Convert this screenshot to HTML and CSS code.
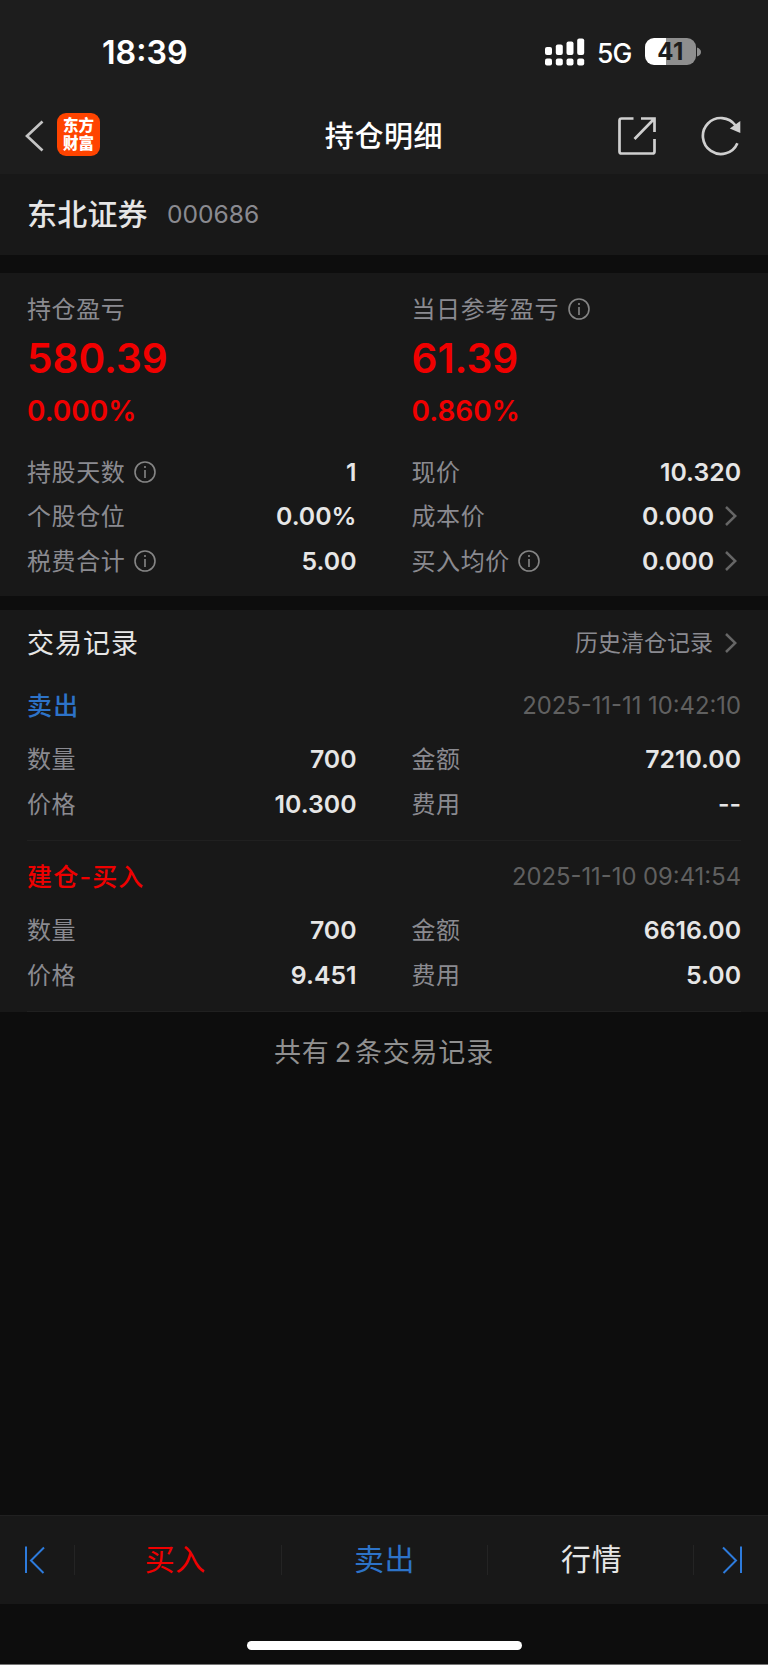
FILE: index.html
```html
<!DOCTYPE html>
<html lang="zh-CN">
<head>
    <meta charset="UTF-8">
    <title>持仓明细</title>
    <link rel="stylesheet" href="styles.css">
</head>
<body>
    <div class="header">
        <div class="status">
            <span class="time">18:39</span>
            <svg class="signal" width="40" height="28" viewBox="0 0 40 28" fill="#fff">
                <rect x="0" y="9" width="7" height="8" rx="2"/>
                <rect x="10.8" y="6.5" width="7" height="10.5" rx="2"/>
                <rect x="21.5" y="3.5" width="7" height="13.5" rx="2"/>
                <rect x="32.2" y="0.5" width="7" height="16.5" rx="2"/>
                <rect x="0" y="20.5" width="7" height="7" rx="2"/>
                <rect x="10.8" y="20.5" width="7" height="7" rx="2"/>
                <rect x="21.5" y="20.5" width="7" height="7" rx="2"/>
                <rect x="32.2" y="20.5" width="7" height="7" rx="2"/>
            </svg>
            <span class="network">5G</span>
            <span class="battery">41</span>
            <svg class="battery-cap" width="4" height="10" viewBox="0 0 4 10"><path d="M0 0.5Q4 2 4 5T0 9.5Z" fill="#8e8e8e"/></svg>
        </div>
        <div class="nav">
            <svg class="back" width="20" height="32" viewBox="0 0 20 32" fill="none" stroke="#c4c4c4" stroke-width="2.7"><path d="M17.5 1.5L2 16L17.5 30.5"/></svg>
            <div class="logo"><span>东方</span><span>财富</span></div>
            <h1>持仓明细</h1>
            <svg class="share" width="38" height="38" viewBox="0 0 38 38" fill="none" stroke="#cfcfcf" stroke-width="2.7">
                <path d="M15.5 1.5H3.5Q1.5 1.5 1.5 3.5V34.5Q1.5 36.5 3.5 36.5H34.5Q36.5 36.5 36.5 34.5V22"/>
                <path d="M23 1.5H36.5V15M36 2L16.5 22"/>
            </svg>
            <svg class="refresh" width="42" height="40" viewBox="0 0 42 40">
                <path d="M36.4 27.2A18 18 0 1 1 34.5 9.5" fill="none" stroke="#cfcfcf" stroke-width="2.7"/>
                <path d="M39.3 5V17L28.8 12.5Z" fill="#cfcfcf"/>
            </svg>
        </div>
    </div>

    <div class="stock">
        <span class="name">东北证券</span>
        <span class="code">000686</span>
    </div>

    <div class="summary">
        <div class="columns">
            <div class="profit">
                <div class="label"><span>持仓盈亏</span></div>
                <div class="amount">580.39</div>
                <div class="percent">0.000%</div>
            </div>
            <div class="profit">
                <div class="label"><span>当日参考盈亏</span><svg class="info" viewBox="0 0 22 22"><circle cx="11" cy="11" r="10"/><path d="M11 9V17M11 5V7"/></svg></div>
                <div class="amount">61.39</div>
                <div class="percent">0.860%</div>
            </div>
        </div>
        <div class="columns details">
            <div class="row"><div class="label"><span>持股天数</span><svg class="info" viewBox="0 0 22 22"><circle cx="11" cy="11" r="10"/><path d="M11 9V17M11 5V7"/></svg></div><div class="value">1</div></div>
            <div class="row"><div class="label"><span>现价</span></div><div class="value">10.320</div></div>
            <div class="row"><div class="label"><span>个股仓位</span></div><div class="value">0.00%</div></div>
            <div class="row"><div class="label"><span>成本价</span></div><div class="value">0.000<svg class="arrow" viewBox="0 0 12 20"><path d="M1 1L10.3 10L1 19"/></svg></div></div>
            <div class="row"><div class="label"><span>税费合计</span><svg class="info" viewBox="0 0 22 22"><circle cx="11" cy="11" r="10"/><path d="M11 9V17M11 5V7"/></svg></div><div class="value">5.00</div></div>
            <div class="row"><div class="label"><span>买入均价</span><svg class="info" viewBox="0 0 22 22"><circle cx="11" cy="11" r="10"/><path d="M11 9V17M11 5V7"/></svg></div><div class="value">0.000<svg class="arrow" viewBox="0 0 12 20"><path d="M1 1L10.3 10L1 19"/></svg></div></div>
        </div>
    </div>

    <div class="records">
        <div class="records-title">
            <h2>交易记录</h2>
            <div class="history"><span>历史清仓记录</span><svg class="arrow" viewBox="0 0 12 20"><path d="M1 1L10.3 10L1 19"/></svg></div>
        </div>
        <div class="record">
            <div class="record-head">
                <span class="type sell">卖出</span>
                <span class="date">2025-11-11 10:42:10</span>
            </div>
            <div class="columns">
                <div class="row"><div class="label"><span>数量</span></div><div class="value">700</div></div>
                <div class="row"><div class="label"><span>金额</span></div><div class="value">7210.00</div></div>
                <div class="row"><div class="label"><span>价格</span></div><div class="value">10.300</div></div>
                <div class="row"><div class="label"><span>费用</span></div><div class="value">--</div></div>
            </div>
        </div>
        <div class="record">
            <div class="record-head">
                <span class="type buy">建仓-买入</span>
                <span class="date">2025-11-10 09:41:54</span>
            </div>
            <div class="columns">
                <div class="row"><div class="label"><span>数量</span></div><div class="value">700</div></div>
                <div class="row"><div class="label"><span>金额</span></div><div class="value">6616.00</div></div>
                <div class="row"><div class="label"><span>价格</span></div><div class="value">9.451</div></div>
                <div class="row"><div class="label"><span>费用</span></div><div class="value">5.00</div></div>
            </div>
        </div>
    </div>

    <p class="total">共有<span>2</span>条交易记录</p>

    <div class="tabs">
        <div class="step"><svg width="20" height="28" viewBox="0 0 20 28"><path d="M1 0.5V27M19 1.5L6 14.5L18.5 27"/></svg></div>
        <div class="tab tab-buy buy">买入</div>
        <div class="tab sell">卖出</div>
        <div class="tab tab-quote">行情</div>
        <div class="step next"><svg width="20" height="28" viewBox="0 0 20 28"><path d="M19 0.5V27M1 1.5L14 14.5L1.5 27"/></svg></div>
    </div>
    <div class="home"><div class="home-bar"></div></div>
</body>
</html>
```
FILE: styles.css
```css
* {
    box-sizing: border-box;
}

body {
    margin: 0;
    height: 1665px;
    display: flex;
    flex-direction: column;
    background-color: #0d0d0d;
    color: #e6e6e6;
    font-family: Inter, "Noto Sans CJK SC", sans-serif;
    border-bottom: 1px solid #757575;
}

h1, h2, p {
    margin: 0;
}

.header {
    height: 174px;
    background-color: #1d1d1d;
    flex-shrink: 0;
}

.status {
    display: flex;
    align-items: center;
    height: 97px;
    padding: 6px 0 0 102px;
    color: #fff;
}

.time {
    width: 443px;
    padding-top: 1px;
    font-size: 32.2px;
    font-weight: 600;
}

.network {
    margin-left: 12px;
    width: 36px;
    padding-top: 2px;
    font-size: 26.5px;
    font-weight: 450;
    letter-spacing: -0.8px;
}

.battery {
    margin-left: 12px;
    width: 51px;
    height: 27px;
    border-radius: 9px;
    background: linear-gradient(to right, #fff 21px, #8e8e8e 21px);
    color: #1d1d1d;
    font-size: 24px;
    font-weight: 700;
    line-height: 27px;
    letter-spacing: 0.5px;
    text-align: center;
}

.battery-cap {
    margin-left: 1px;
}

.nav {
    display: flex;
    align-items: center;
    height: 77px;
    padding: 0 25px 0 25px;
}

.logo {
    display: flex;
    flex-direction: column;
    align-items: center;
    justify-content: center;
    width: 43px;
    height: 43px;
    margin: 0 0 2px 12px;
    border-radius: 9px;
    background-color: #ff4400;
    color: #fff;
    font-size: 15.5px;
    font-weight: 900;
    line-height: 17.5px;
}

.nav h1 {
    flex: 1;
    padding: 0 0 3px 50px;
    font-size: 29px;
    font-weight: 500;
    letter-spacing: 0.6px;
    color: #fff;
    text-align: center;
}

.share {
    margin-right: 2px;
}

.refresh {
    margin-left: 43px;
}

.stock {
    display: flex;
    align-items: center;
    height: 81px;
    padding: 0 27px 2px;
    background-color: #181818;
    flex-shrink: 0;
}

.name {
    width: 140px;
    padding-bottom: 3px;
    font-size: 30px;
    font-weight: 500;
    letter-spacing: 0.2px;
}

.code {
    padding-top: 1px;
    font-size: 24.6px;
    color: #8a8a90;
}

.summary {
    height: 323px;
    margin-top: 18px;
    padding: 16px 27px 0;
    background-color: #181818;
    flex-shrink: 0;
}

.columns {
    display: grid;
    grid-template-columns: 1fr 1fr;
    column-gap: 55px;
}

.label {
    display: flex;
    align-items: center;
    font-size: 24px;
    letter-spacing: 0.6px;
    color: #8a8a90;
}

.label span,
.history span {
    padding-bottom: 3px;
}

.profit .label {
    height: 40px;
}

.info {
    width: 22px;
    height: 22px;
    margin-left: 8.5px;
    fill: none;
    stroke: #858585;
    stroke-width: 1.6;
}

.amount {
    height: 59px;
    line-height: 59px;
    font-size: 40.5px;
    font-weight: 600;
    color: #f00000;
}

.percent {
    height: 45px;
    line-height: 46px;
    font-size: 28px;
    font-weight: 600;
    color: #f00000;
}

.details {
    margin-top: 16.4px;
}

.row {
    display: flex;
    align-items: center;
    justify-content: space-between;
    height: 44.6px;
}

.value {
    display: flex;
    align-items: center;
    font-size: 24.8px;
    font-weight: 600;
}

.arrow {
    width: 12px;
    height: 20px;
    margin: 0 4px 0 11px;
    fill: none;
    stroke: #666;
    stroke-width: 2.5;
}

.records {
    height: 402px;
    margin-top: 14px;
    padding: 6px 27px 0;
    background-color: #181818;
    flex-shrink: 0;
}

.records-title {
    display: flex;
    align-items: center;
    justify-content: space-between;
    height: 53px;
}

.records-title h2 {
    padding-bottom: 2px;
    font-size: 27px;
    font-weight: 400;
    letter-spacing: 1px;
}

.history {
    display: flex;
    align-items: center;
    font-size: 23px;
    color: #8a8a90;
}

.history .arrow {
    margin-left: 12px;
}

.record {
    height: 171.5px;
    padding-top: 6px;
    border-bottom: 1px solid #202020;
}

.record-head {
    display: flex;
    align-items: center;
    justify-content: space-between;
    height: 60px;
    margin-bottom: 1.7px;
}

.type {
    padding-bottom: 3px;
    font-size: 25px;
    font-weight: 500;
    letter-spacing: 1.2px;
}

.sell {
    color: #2d73c8;
}

.buy {
    color: #f00000;
}

.date {
    font-size: 23.8px;
    color: #606060;
}

.total {
    margin-top: 21px;
    font-size: 27px;
    line-height: 40px;
    letter-spacing: 0.8px;
    color: #909090;
    text-align: center;
}

.total span {
    margin: 0 3px 0 5px;
}

.tabs {
    display: flex;
    align-items: center;
    height: 89px;
    margin-top: auto;
    border-top: 1px solid #202020;
    background-color: #181818;
    flex-shrink: 0;
}

.step {
    width: 74px;
    height: 28px;
    padding-left: 25px;
    flex-shrink: 0;
}

.next {
    padding-left: 28px;
}

.step svg {
    fill: none;
    stroke: #2d7bdc;
    stroke-width: 2;
}

.tab {
    width: 207px;
    height: 30px;
    border-left: 1px solid #242424;
    font-size: 30px;
    line-height: 28px;
    letter-spacing: 0.6px;
    text-align: center;
}

.tab-buy {
    padding-right: 5px;
}

.tab-quote {
    padding-left: 2px;
    border-right: 1px solid #242424;
}

.home {
    display: flex;
    justify-content: center;
    height: 60px;
    padding-top: 37px;
    flex-shrink: 0;
}

.home-bar {
    width: 275px;
    height: 9px;
    border-radius: 5px;
    background-color: #fff;
}
```
